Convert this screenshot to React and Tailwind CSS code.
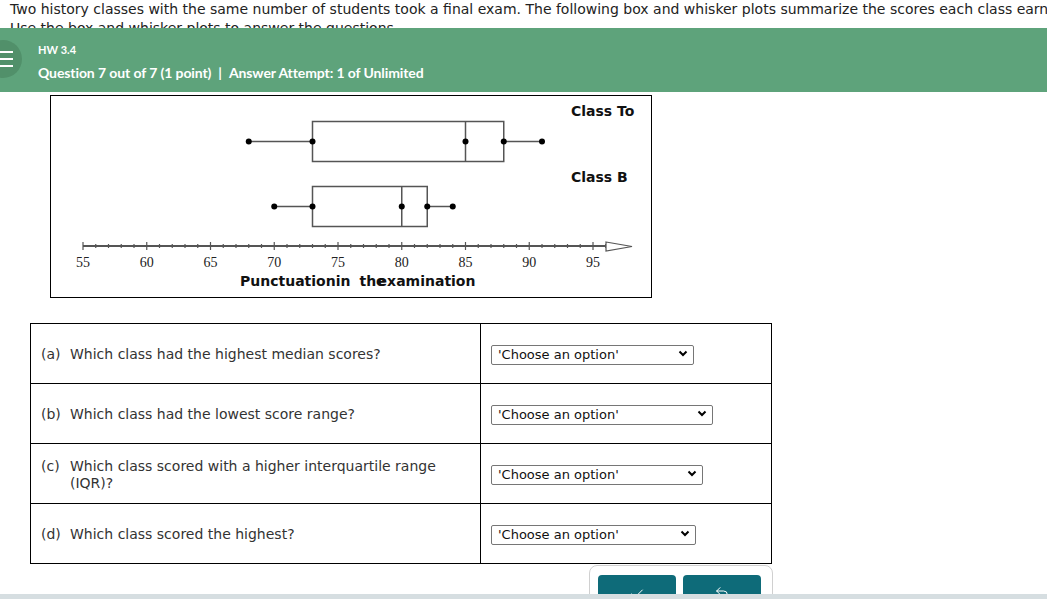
import React from "react";
import { Check, Undo2 } from "lucide-react";

const X = (v) => 32 + (v - 55) * 12.75;

function Chart() {
  const ticks = [];
  for (let v = 55; v <= 96; v++) {
    const major = v % 5 === 0;
    ticks.push(
      <line key={v} x1={X(v)} x2={X(v)} y1={major ? 146 : 148} y2={major ? 154 : 152} stroke="#555" strokeWidth="1.2" />
    );
  }
  const labels = [55, 60, 65, 70, 75, 80, 85, 90, 95];
  const box = (min, q1, med, q3, max, top) => {
    const mid = top + 20;
    return (
      <g>
        <line x1={X(min)} x2={X(q1)} y1={mid} y2={mid} stroke="#555" strokeWidth="1.5" />
        <line x1={X(q3)} x2={X(max)} y1={mid} y2={mid} stroke="#555" strokeWidth="1.5" />
        <rect x={X(q1)} y={top} width={X(q3) - X(q1)} height={40} fill="none" stroke="#555" strokeWidth="1.5" />
        <line x1={X(med)} x2={X(med)} y1={top} y2={top + 40} stroke="#555" strokeWidth="1.5" />
        {[min, q1, med, q3, max].map((v, i) => (
          <circle key={i} cx={X(v)} cy={mid} r="3" fill="#000" />
        ))}
      </g>
    );
  };
  return (
    <svg width="599" height="200" viewBox="0 0 599 200">
      {box(68, 73, 85, 88, 91, 25.5)}
      {box(70, 73, 80, 82, 84, 90.5)}
      <line x1={X(55)} x2={X(96)} y1={150} y2={150} stroke="#555" strokeWidth="2" />
      {ticks}
      <polygon points="555,146 581,150.5 555,155" fill="#fff" stroke="#555" strokeWidth="1.2" />
      {labels.map((v) => (
        <text key={v} x={X(v)} y={171} textAnchor="middle" fontFamily="'Liberation Serif', serif" fontSize="14" fill="#222">
          {v}
        </text>
      ))}
      <text x={520} y={20} fontFamily="'DejaVu Sans', sans-serif" fontWeight="bold" fontSize="14" fill="#111">Class To</text>
      <text x={520} y={86} fontFamily="'DejaVu Sans', sans-serif" fontWeight="bold" fontSize="14" fill="#111">Class B</text>
      <text x={189} y={190} fontFamily="'DejaVu Sans', sans-serif" fontWeight="bold" fontSize="14" fill="#111">
        Punctuationin<tspan dx="9">the</tspan><tspan dx="-8">examination</tspan>
      </text>
    </svg>
  );
}

function Select({ w }) {
  return (
    <div className={`relative h-[20px] ${w}`}>
      <select className="appearance-none w-full h-full border border-[#767676] rounded-[2px] bg-white pl-[6px] text-[13px] leading-[18px] text-[#111] outline-none" style={{ fontFamily: "'DejaVu Sans', sans-serif" }}>
        <option>'Choose an option'</option>
      </select>
      <svg className="absolute right-[6px] top-[6px] pointer-events-none" width="10" height="8" viewBox="0 0 10 8">
        <path d="M1.5 1.5 L5 5 L8.5 1.5" fill="none" stroke="#000" strokeWidth="2" />
      </svg>
    </div>
  );
}

const rows = [
  { l: "(a)", t: ["Which class had the highest median scores?"], w: "w-[203px]" },
  { l: "(b)", t: ["Which class had the lowest score range?"], w: "w-[222px]" },
  { l: "(c)", t: ["Which class scored with a higher interquartile range", "(IQR)?"], w: "w-[212px]" },
  { l: "(d)", t: ["Which class scored the highest?"], w: "w-[205px]" },
];

export default function App() {
  return (
    <div className="relative w-[1047px] h-[599px] overflow-hidden bg-white text-[#222]" style={{ fontFamily: "'DejaVu Sans', Verdana, sans-serif" }}>
      <div className="h-[28px] overflow-hidden pl-[10px] text-[14px] leading-[19px] whitespace-nowrap">
        <div>Two history classes with the same number of students took a final exam. The following box and whisker plots summarize the scores each class earned.</div>
        <div>Use the box and whisker plots to answer the questions.</div>
      </div>
      <div className="relative h-[64px] bg-[#5ea37b] overflow-hidden text-white" style={{ fontFamily: "Lato, sans-serif" }}>
        <div className="absolute left-[-16px] top-[12px] w-[38px] h-[38px] rounded-full bg-[#51906a] flex flex-col justify-center items-end pr-[9px] gap-[5px]">
          <div className="w-[14px] h-[2px] bg-white" />
          <div className="w-[14px] h-[2px] bg-white" />
          <div className="w-[14px] h-[2px] bg-white" />
        </div>
        <div className="pl-[38px] pt-[15px] flex flex-col">
          <div className="text-[11px] font-bold leading-[14px]">HW 3.4</div>
          <div className="mt-[8px] text-[14px] font-bold leading-[16px] tracking-[-0.1px]">
            Question 7 out of 7 (1 point)<span className="mx-[7px]">|</span>Answer Attempt: 1 of Unlimited
          </div>
        </div>
      </div>
      <div className="ml-[50px] mt-[3px] w-[602px] h-[203px] border border-black">
        <Chart />
      </div>
      <table className="ml-[30px] mt-[25px] border-collapse w-[742px] text-[14px] text-[#333]">
        <tbody>
          {rows.map((r, i) => (
            <tr key={i} className="h-[60px]">
              <td className="w-[450px] border border-black pl-[10px] pt-[2px] align-middle">
                <div className="flex leading-[17px]">
                  <span className="w-[29px] shrink-0">{r.l}</span>
                  <span>
                    {r.t.map((x, j) => (
                      <div key={j}>{x}</div>
                    ))}
                  </span>
                </div>
              </td>
              <td className="border border-black pl-[10px] align-middle">
                <Select w={r.w} />
              </td>
            </tr>
          ))}
        </tbody>
      </table>
      <div className="ml-[589px] mt-[1px] w-[184px] h-[40px] border border-[#d0d0d0] rounded-[8px] bg-white flex gap-[7px] pl-[8px] pt-[9px]">
        <div className="w-[78px] h-[30px] rounded-[4px] bg-[#0e6b79] flex justify-center pt-[11px]">
          <Check size={16} color="#fff" strokeWidth={1.5} />
        </div>
        <div className="w-[78px] h-[30px] rounded-[4px] bg-[#0e6b79] flex justify-center pt-[10px]">
          <Undo2 size={16} color="#fff" strokeWidth={1.5} />
        </div>
      </div>
      <div className="absolute left-0 bottom-0 w-full h-[5px] bg-[#d6dee1]" />
    </div>
  );
}
